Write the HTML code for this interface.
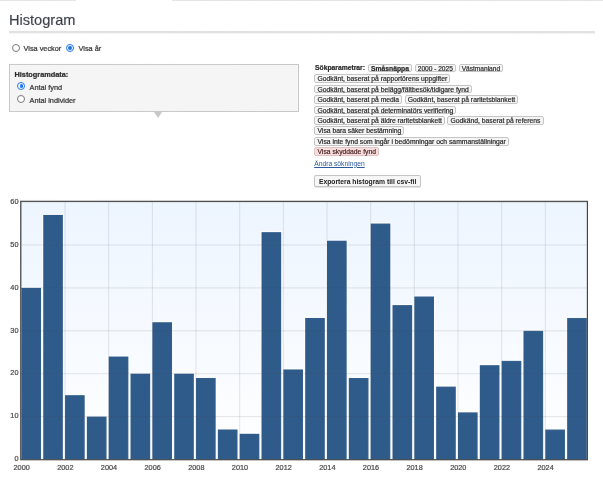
<!DOCTYPE html>
<html><head><meta charset="utf-8"><title>Histogram</title>
<style>
html,body{margin:0;padding:0;background:#fff;}
body{width:603px;height:481px;overflow:hidden;position:relative;font-family:"Liberation Sans",sans-serif;color:#333;}
.abs{position:absolute;white-space:nowrap;}
h1{position:absolute;left:9.2px;top:11.3px;margin:0;font-weight:400;font-size:15.4px;transform:scaleX(0.947);transform-origin:0 0;-webkit-text-stroke:0.15px #383c48;color:#383c48 !important;line-height:18px;color:#333;white-space:nowrap;}
.hr{position:absolute;left:9.2px;width:586.3px;top:31.2px;height:1.7px;background:#e1e1e1;border-bottom:1.2px solid #f6f6f6;}
.t{position:absolute;-webkit-text-stroke:0.22px #333;font-size:7.33px;line-height:10px;white-space:nowrap;color:#333;}
.radio{position:absolute;width:8px;height:8px;border-radius:50%;border:0.8px solid #767676;box-sizing:border-box;background:#fff;}
.radio.on{border-color:#1a73e8;}
.radio.on::after{content:"";position:absolute;left:1.3px;top:1.3px;width:3.8px;height:3.8px;border-radius:50%;background:#1a73e8;}
.panel{position:absolute;left:9px;top:63.5px;width:289.6px;height:48px;box-sizing:border-box;border:1px solid #c8c8c8;background:#f5f5f5;}
.arrow{position:absolute;left:153.5px;top:111.5px;width:0;height:0;border-left:4.5px solid transparent;border-right:4.5px solid transparent;border-top:6px solid #c8c8c8;}
.row{position:absolute;-webkit-text-stroke:0.18px #222;left:314.4px;height:10px;line-height:10px;font-size:6.77px;white-space:nowrap;color:#222;}
.row b.sp{font-weight:700;margin-left:0.6px;margin-right:3px;color:#222;}
.tag{display:inline-block;box-sizing:border-box;height:8.7px;line-height:7.4px;padding:0 2.1px;border:0.67px solid #c4c4c4;border-radius:2px;background:#f6f6f6;margin-right:2.4px;vertical-align:middle;color:#222;}
.r1 .tag{margin-right:2.7px;letter-spacing:-0.02px;}
.r1 .tag+.tag{font-size:6.62px;}
.tag.red{background:#f7dede;border-color:#e0c2c2;color:#4a2020;-webkit-text-stroke-color:#4a2020;}
.link{position:absolute;left:314.2px;top:158.5px;font-size:6.72px;line-height:10px;color:#2a589e;text-decoration:underline;white-space:nowrap;}
.btn{position:absolute;left:314.4px;top:174.9px;width:106.4px;height:12.3px;box-sizing:border-box;border:0.8px solid #c4c4c4;box-shadow:0 0.5px 0.8px rgba(0,0,0,0.12);border-radius:2px;background:#f6f6f6;font-size:6.78px;font-weight:700;line-height:11px;text-align:center;color:#222;white-space:nowrap;}
.yl{position:absolute;-webkit-text-stroke:0.2px #444;left:0;width:18.5px;text-align:right;font-size:7.33px;line-height:9px;color:#444;}
.xl{position:absolute;-webkit-text-stroke:0.2px #444;margin-left:0.3px;top:462.9px;width:40px;text-align:center;font-size:7.33px;line-height:9px;color:#444;}
.topline{position:absolute;top:0;height:1px;background:#e4e4e4;}
#w{position:absolute;left:0;top:0;width:603px;height:481px;transform:rotate(0.01deg);transform-origin:301px 240px;will-change:transform;}
</style></head><body><div id="w">
<div class="topline" style="left:0;width:76px"></div>
<div class="topline" style="left:172px;right:0"></div>
<h1>Histogram</h1>
<div class="hr"></div>
<div class="radio" style="left:11.9px;top:43.8px"></div><div class="t" style="left:23.5px;top:44.4px">Visa veckor</div>
<div class="radio on" style="left:66.1px;top:43.6px"></div><div class="t" style="left:78.5px;top:44.4px">Visa år</div>
<div class="panel"></div><div class="arrow"></div>
<div class="t" style="left:14.5px;top:69.5px;font-weight:700;color:#222">Histogramdata:</div>
<div class="radio on" style="left:17.4px;top:82.1px"></div><div class="t" style="left:29.5px;top:83.2px">Antal fynd</div>
<div class="radio" style="left:17.4px;top:95.2px"></div><div class="t" style="left:29.5px;top:95.9px">Antal individer</div>
<div class="row r1" style="top:62.85px"><b class="sp">Sökparametrar:</b><span class="tag"><b>Småsnäppa</b></span><span class="tag">2000 - 2025</span><span class="tag">Västmanland</span></div><div class="row" style="top:73.30px"><span class="tag">Godkänt, baserat på rapportörens uppgifter</span></div><div class="row" style="top:83.75px"><span class="tag">Godkänt, baserat på belägg/fältbesök/tidigare fynd</span></div><div class="row" style="top:94.20px"><span class="tag">Godkänt, baserat på media</span><span class="tag">Godkänt, baserat på raritetsblankett</span></div><div class="row" style="top:104.65px"><span class="tag">Godkänt, baserat på determinatörs verifiering</span></div><div class="row" style="top:115.10px"><span class="tag">Godkänt, baserat på äldre raritetsblankett</span><span class="tag">Godkänd, baserat på referens</span></div><div class="row" style="top:125.55px"><span class="tag">Visa bara säker bestämning</span></div><div class="row" style="top:136.00px"><span class="tag">Visa inte fynd som ingår i bedömningar och sammanställningar</span></div><div class="row" style="top:146.45px"><span class="tag red">Visa skyddade fynd</span></div>
<div class="link">Ändra sökningen</div>
<div class="btn">Exportera histogram till csv-fil</div>
<svg style="position:absolute;left:0;top:0" width="603" height="481" viewBox="0 0 603 481"><defs><linearGradient id="g" x1="0" y1="0" x2="0" y2="1"><stop offset="0" stop-color="#edf5ff"/><stop offset="1" stop-color="#ffffff"/></linearGradient></defs><rect x="20.75" y="201.35" width="566.65" height="258.4" fill="url(#g)"/><rect x="20.20" y="286.72" width="22.05" height="172.83" fill="#fff" fill-opacity="0.75"/><rect x="42.03" y="213.77" width="22.05" height="245.78" fill="#fff" fill-opacity="0.75"/><rect x="63.86" y="393.99" width="22.05" height="65.56" fill="#fff" fill-opacity="0.75"/><rect x="85.69" y="415.44" width="22.05" height="44.11" fill="#fff" fill-opacity="0.75"/><rect x="107.52" y="355.37" width="22.05" height="104.18" fill="#fff" fill-opacity="0.75"/><rect x="129.35" y="372.53" width="22.05" height="87.02" fill="#fff" fill-opacity="0.75"/><rect x="151.18" y="321.04" width="22.05" height="138.51" fill="#fff" fill-opacity="0.75"/><rect x="173.01" y="372.53" width="22.05" height="87.02" fill="#fff" fill-opacity="0.75"/><rect x="194.84" y="376.82" width="22.05" height="82.73" fill="#fff" fill-opacity="0.75"/><rect x="216.67" y="428.31" width="22.05" height="31.24" fill="#fff" fill-opacity="0.75"/><rect x="238.50" y="432.61" width="22.05" height="26.95" fill="#fff" fill-opacity="0.75"/><rect x="260.33" y="230.94" width="22.05" height="228.61" fill="#fff" fill-opacity="0.75"/><rect x="282.16" y="368.24" width="22.05" height="91.31" fill="#fff" fill-opacity="0.75"/><rect x="303.99" y="316.75" width="22.05" height="142.80" fill="#fff" fill-opacity="0.75"/><rect x="325.82" y="239.52" width="22.05" height="220.03" fill="#fff" fill-opacity="0.75"/><rect x="347.65" y="376.82" width="22.05" height="82.73" fill="#fff" fill-opacity="0.75"/><rect x="369.48" y="222.35" width="22.05" height="237.20" fill="#fff" fill-opacity="0.75"/><rect x="391.31" y="303.88" width="22.05" height="155.67" fill="#fff" fill-opacity="0.75"/><rect x="413.14" y="295.30" width="22.05" height="164.25" fill="#fff" fill-opacity="0.75"/><rect x="434.97" y="385.41" width="22.05" height="74.14" fill="#fff" fill-opacity="0.75"/><rect x="456.80" y="411.15" width="22.05" height="48.40" fill="#fff" fill-opacity="0.75"/><rect x="478.63" y="363.95" width="22.05" height="95.60" fill="#fff" fill-opacity="0.75"/><rect x="500.46" y="359.66" width="22.05" height="99.89" fill="#fff" fill-opacity="0.75"/><rect x="522.29" y="329.62" width="22.05" height="129.93" fill="#fff" fill-opacity="0.75"/><rect x="544.12" y="428.31" width="22.05" height="31.24" fill="#fff" fill-opacity="0.75"/><rect x="565.95" y="316.75" width="22.05" height="142.80" fill="#fff" fill-opacity="0.75"/><rect x="21.40" y="287.92" width="19.65" height="171.63" fill="#2f5b8b"/><rect x="43.23" y="214.97" width="19.65" height="244.58" fill="#2f5b8b"/><rect x="65.06" y="395.19" width="19.65" height="64.36" fill="#2f5b8b"/><rect x="86.89" y="416.64" width="19.65" height="42.91" fill="#2f5b8b"/><rect x="108.72" y="356.57" width="19.65" height="102.98" fill="#2f5b8b"/><rect x="130.55" y="373.73" width="19.65" height="85.82" fill="#2f5b8b"/><rect x="152.38" y="322.24" width="19.65" height="137.31" fill="#2f5b8b"/><rect x="174.21" y="373.73" width="19.65" height="85.82" fill="#2f5b8b"/><rect x="196.04" y="378.02" width="19.65" height="81.53" fill="#2f5b8b"/><rect x="217.87" y="429.51" width="19.65" height="30.04" fill="#2f5b8b"/><rect x="239.70" y="433.81" width="19.65" height="25.75" fill="#2f5b8b"/><rect x="261.53" y="232.14" width="19.65" height="227.41" fill="#2f5b8b"/><rect x="283.36" y="369.44" width="19.65" height="90.11" fill="#2f5b8b"/><rect x="305.19" y="317.95" width="19.65" height="141.60" fill="#2f5b8b"/><rect x="327.02" y="240.72" width="19.65" height="218.83" fill="#2f5b8b"/><rect x="348.85" y="378.02" width="19.65" height="81.53" fill="#2f5b8b"/><rect x="370.68" y="223.55" width="19.65" height="236.00" fill="#2f5b8b"/><rect x="392.51" y="305.08" width="19.65" height="154.47" fill="#2f5b8b"/><rect x="414.34" y="296.50" width="19.65" height="163.05" fill="#2f5b8b"/><rect x="436.17" y="386.61" width="19.65" height="72.94" fill="#2f5b8b"/><rect x="458.00" y="412.35" width="19.65" height="47.20" fill="#2f5b8b"/><rect x="479.83" y="365.15" width="19.65" height="94.40" fill="#2f5b8b"/><rect x="501.66" y="360.86" width="19.65" height="98.69" fill="#2f5b8b"/><rect x="523.49" y="330.82" width="19.65" height="128.73" fill="#2f5b8b"/><rect x="545.32" y="429.51" width="19.65" height="30.04" fill="#2f5b8b"/><rect x="567.15" y="317.95" width="19.65" height="141.60" fill="#2f5b8b"/><line x1="20.75" x2="587.4" y1="459.55" y2="459.55" stroke="rgba(70,70,70,0.2)" stroke-width="0.7"/><line x1="20.75" x2="587.4" y1="416.64" y2="416.64" stroke="rgba(70,70,70,0.2)" stroke-width="0.7"/><line x1="20.75" x2="587.4" y1="373.73" y2="373.73" stroke="rgba(70,70,70,0.2)" stroke-width="0.7"/><line x1="20.75" x2="587.4" y1="330.82" y2="330.82" stroke="rgba(70,70,70,0.2)" stroke-width="0.7"/><line x1="20.75" x2="587.4" y1="287.92" y2="287.92" stroke="rgba(70,70,70,0.2)" stroke-width="0.7"/><line x1="20.75" x2="587.4" y1="245.01" y2="245.01" stroke="rgba(70,70,70,0.2)" stroke-width="0.7"/><line x1="20.75" x2="587.4" y1="202.10" y2="202.10" stroke="rgba(70,70,70,0.2)" stroke-width="0.7"/><line y1="201.35" y2="459.75" x1="21.40" x2="21.40" stroke="rgba(70,70,70,0.2)" stroke-width="0.7"/><line y1="201.35" y2="459.75" x1="65.06" x2="65.06" stroke="rgba(70,70,70,0.2)" stroke-width="0.7"/><line y1="201.35" y2="459.75" x1="108.72" x2="108.72" stroke="rgba(70,70,70,0.2)" stroke-width="0.7"/><line y1="201.35" y2="459.75" x1="152.38" x2="152.38" stroke="rgba(70,70,70,0.2)" stroke-width="0.7"/><line y1="201.35" y2="459.75" x1="196.04" x2="196.04" stroke="rgba(70,70,70,0.2)" stroke-width="0.7"/><line y1="201.35" y2="459.75" x1="239.70" x2="239.70" stroke="rgba(70,70,70,0.2)" stroke-width="0.7"/><line y1="201.35" y2="459.75" x1="283.36" x2="283.36" stroke="rgba(70,70,70,0.2)" stroke-width="0.7"/><line y1="201.35" y2="459.75" x1="327.02" x2="327.02" stroke="rgba(70,70,70,0.2)" stroke-width="0.7"/><line y1="201.35" y2="459.75" x1="370.68" x2="370.68" stroke="rgba(70,70,70,0.2)" stroke-width="0.7"/><line y1="201.35" y2="459.75" x1="414.34" x2="414.34" stroke="rgba(70,70,70,0.2)" stroke-width="0.7"/><line y1="201.35" y2="459.75" x1="458.00" x2="458.00" stroke="rgba(70,70,70,0.2)" stroke-width="0.7"/><line y1="201.35" y2="459.75" x1="501.66" x2="501.66" stroke="rgba(70,70,70,0.2)" stroke-width="0.7"/><line y1="201.35" y2="459.75" x1="545.32" x2="545.32" stroke="rgba(70,70,70,0.2)" stroke-width="0.7"/><rect x="20.75" y="201.35" width="566.65" height="258.4" fill="none" stroke="#404040" stroke-width="1.15"/></svg>
<div class="yl" style="top:454.30px">0</div><div class="yl" style="top:411.39px">10</div><div class="yl" style="top:368.48px">20</div><div class="yl" style="top:325.57px">30</div><div class="yl" style="top:282.67px">40</div><div class="yl" style="top:239.76px">50</div><div class="yl" style="top:196.85px">60</div><div class="xl" style="left:1.40px">2000</div><div class="xl" style="left:45.06px">2002</div><div class="xl" style="left:88.72px">2004</div><div class="xl" style="left:132.38px">2006</div><div class="xl" style="left:176.04px">2008</div><div class="xl" style="left:219.70px">2010</div><div class="xl" style="left:263.36px">2012</div><div class="xl" style="left:307.02px">2014</div><div class="xl" style="left:350.68px">2016</div><div class="xl" style="left:394.34px">2018</div><div class="xl" style="left:438.00px">2020</div><div class="xl" style="left:481.66px">2022</div><div class="xl" style="left:525.32px">2024</div>
</div></body></html>
